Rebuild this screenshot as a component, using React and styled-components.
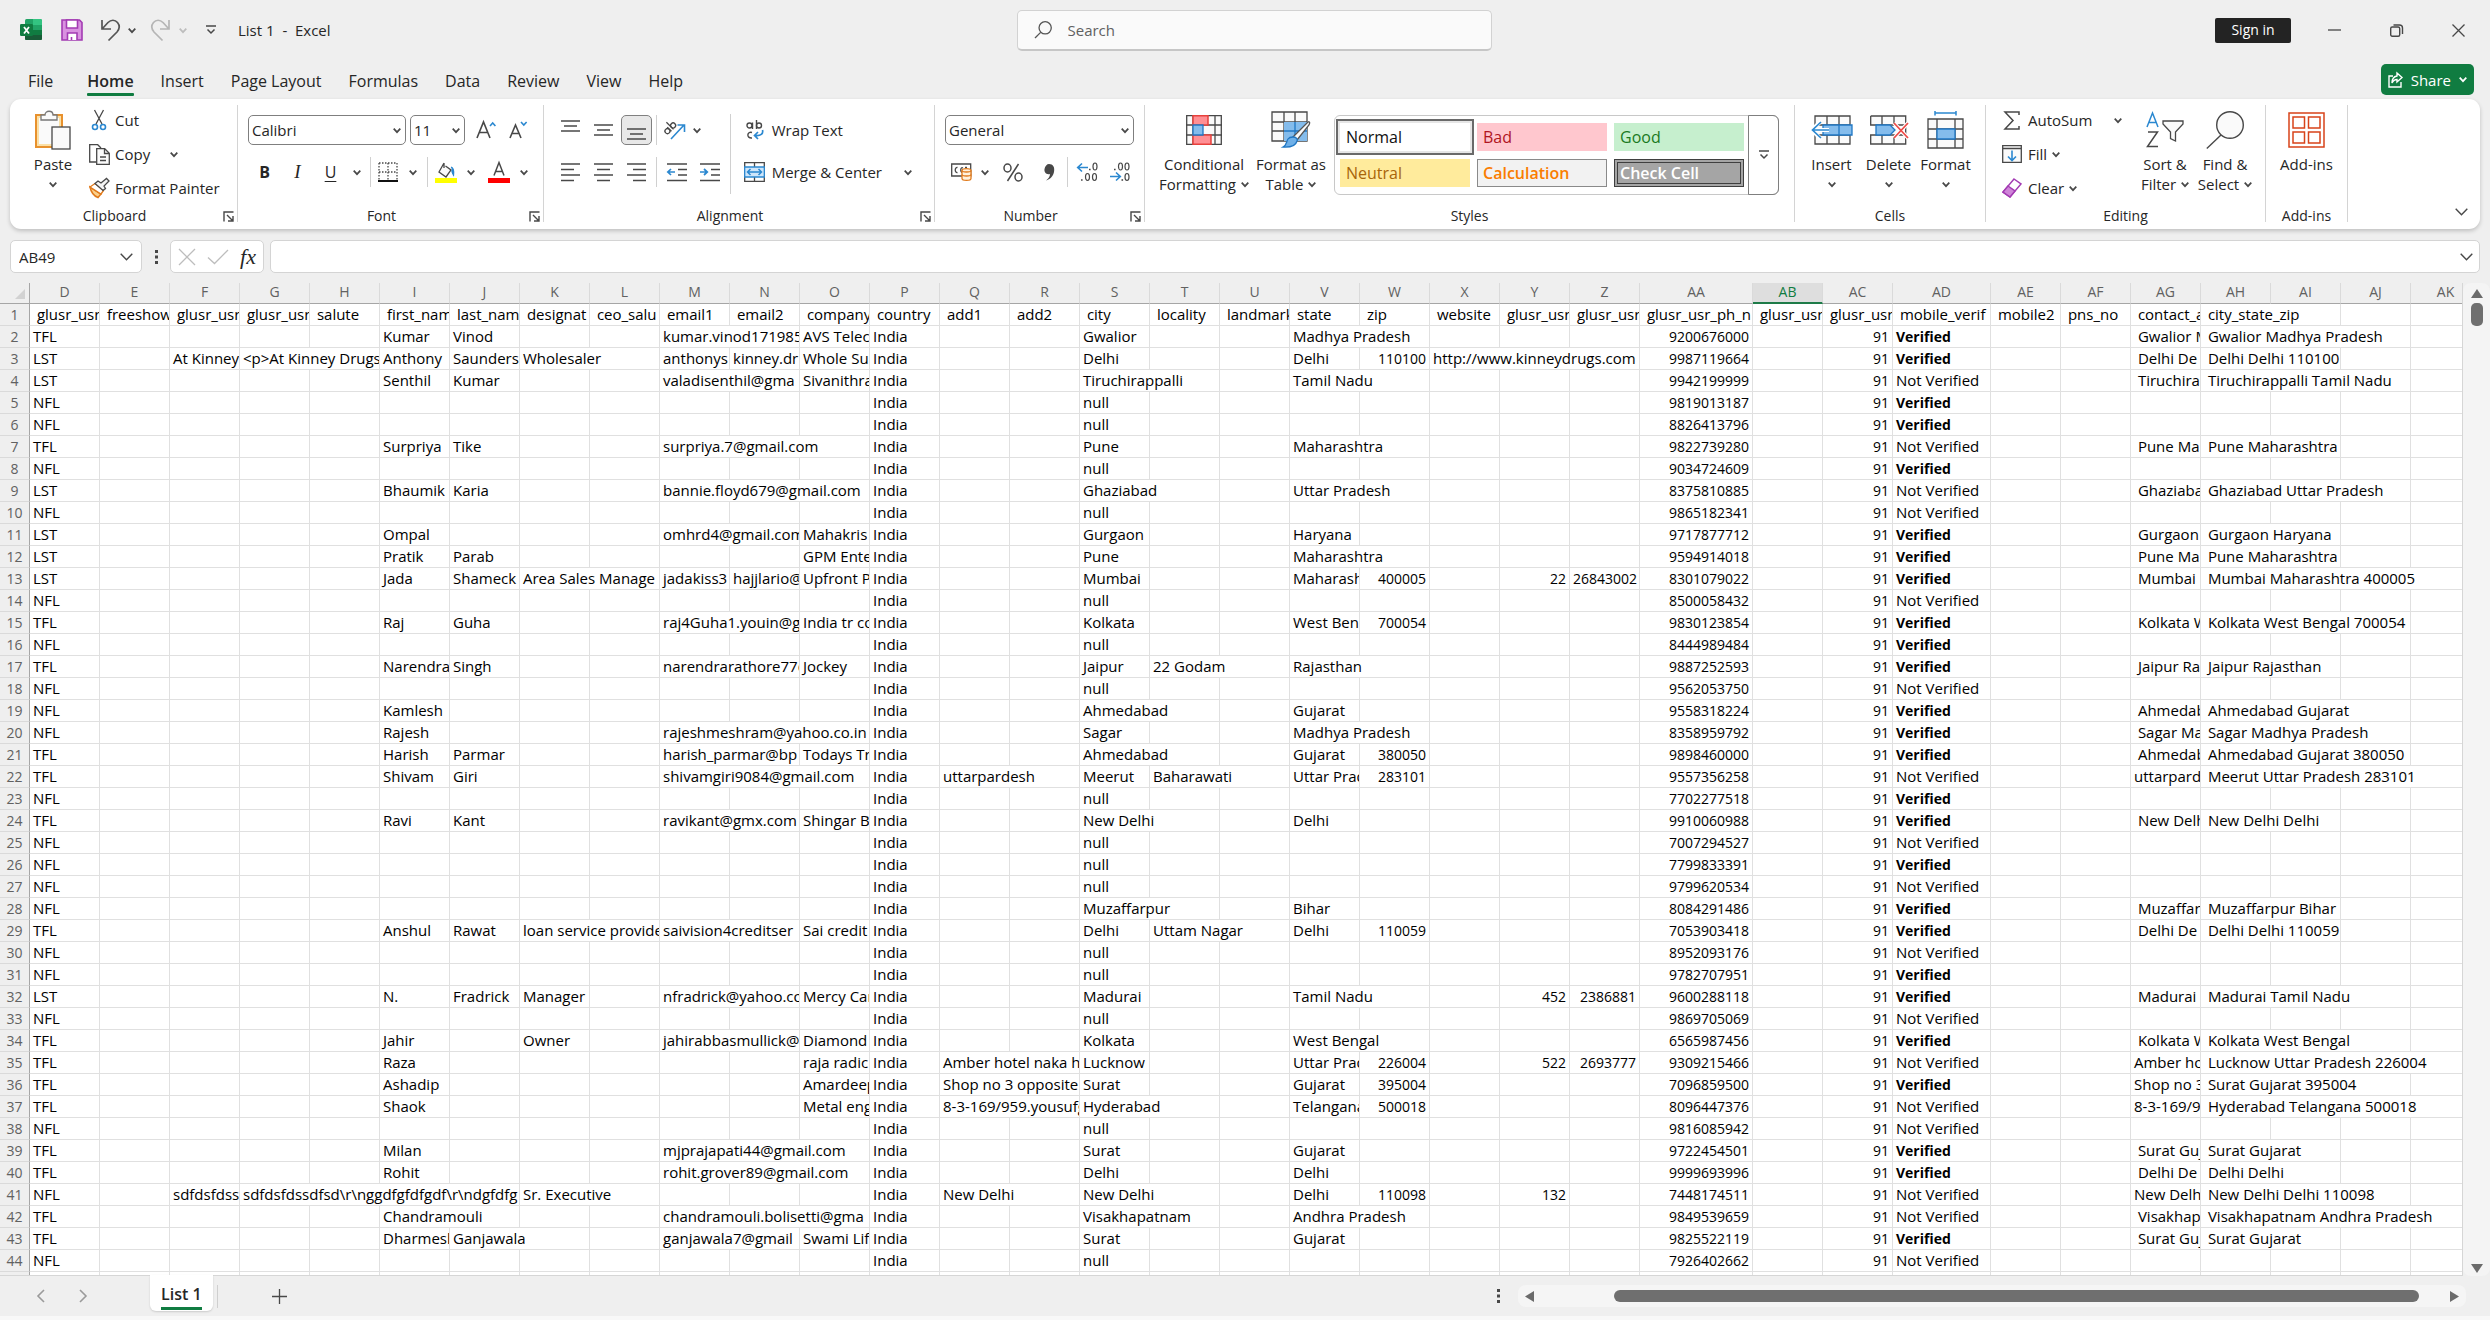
import React from "react";
import styled, { createGlobalStyle, css } from "styled-components";

const GlobalStyle = createGlobalStyle`
  *, *::before, *::after { box-sizing: border-box; }
  body { margin: 0; background: #efefef; color: #262626; font-family: "Open Sans", "Noto Sans", sans-serif; font-size: 15px; line-height: 20px; }
  button, input, select { font: inherit; color: inherit; margin: 0; }
  button { border: 0; background: none; padding: 0; cursor: pointer; white-space: nowrap; }
  svg { display: block; flex: none; overflow: visible; }
`;

/* ---------- shell ---------- */
const Window = styled.div`
  display: flex;
  flex-direction: column;
  height: 100vh;
  overflow: hidden;
`;
const TitleBar = styled.header`
  display: grid;
  grid-template-columns: 1fr 475px 1fr;
  align-items: center;
  height: 60px;
  padding: 0 0 0 20px;
`;
const QuickAccess = styled.div`
  display: flex;
  align-items: center;
  height: 41px;
`;
const QuickButton = styled.button`
  display: flex;
  justify-content: center;
  align-items: center;
  width: ${(p) => p.$w}px;
  height: 30px;
`;
const DocTitle = styled.h1`
  margin: 0 0 0 5px;
  font-size: 15px;
  font-weight: 400;
  white-space: pre;
`;
const SearchBox = styled.label`
  display: flex;
  align-items: center;
  gap: 16px;
  height: 41px;
  padding: 0 16px;
  margin: 0 1px 0 -1px;
  border: 1px solid #d2d2d2;
  border-bottom: 2px solid #c6c6c6;
  border-radius: 5px;
  background: #fafafa;
`;
const SearchInput = styled.input`
  flex: 1;
  min-width: 0;
  padding: 0;
  border: 0;
  outline: 0;
  background: none;
  &::placeholder { color: #616161; opacity: 1; }
`;
const WindowControls = styled.div`
  display: flex;
  justify-content: flex-end;
  align-items: center;
  padding-right: 1px;
`;
const SignIn = styled.button`
  width: 76px;
  height: 25px;
  margin-right: 12px;
  border-radius: 2px;
  background: #232323;
  color: #fff;
  font-size: 14px;
`;
const ControlButton = styled.button`
  display: flex;
  justify-content: center;
  align-items: center;
  width: 62px;
  height: 40px;
`;
const TabBar = styled.nav`
  display: flex;
  align-items: flex-start;
  height: 39px;
  padding: 4px 16px 0 15px;
`;
const Tab = styled.button`
  display: flex;
  flex-direction: column;
  align-items: stretch;
  margin: 0 ${(p) => (p.$file ? 21 : 14)}px 0 13px;
  padding-top: 6px;
  font-size: 16px;
  line-height: 22px;
  font-weight: ${(p) => (p.$active ? 600 : 400)};
  &::after {
    content: "";
    height: 3px;
    margin-top: 1px;
    border-radius: 1px;
    background: ${(p) => (p.$active ? "#107c41" : "transparent")};
  }
`;
const Share = styled.button`
  display: flex;
  align-items: center;
  gap: 8px;
  height: 31px;
  margin-left: auto;
  padding: 0 7px;
  border-radius: 5px;
  background: #107c41;
  color: #fff;
  font-size: 15px;
`;

/* ---------- ribbon ---------- */
const Ribbon = styled.section`
  display: flex;
  flex: none;
  height: 130px;
  margin: 0 10px 11px;
  border-radius: 11px;
  background: #fff;
  box-shadow: 0 2px 4px rgba(0, 0, 0, 0.2);
`;
const GroupBox = styled.div`
  display: flex;
  flex-direction: column;
  flex: none;
  width: ${(p) => p.$w}px;
  border-right: 1px solid;
  border-image: linear-gradient(transparent 7px, #d4d4d4 7px, #d4d4d4 122px, transparent 122px) 1;
`;
const GroupBody = styled.div`
  display: flex;
  flex: 1;
  align-items: flex-start;
  padding-left: ${(p) => p.$pad}px;
  gap: ${(p) => p.$gap || 0}px;
`;
const GroupFoot = styled.div`
  display: flex;
  align-items: center;
  height: 22px;
  padding-bottom: 4px;
  font-size: 14px;
  line-height: 18px;
`;
const GroupLabel = styled.span`
  flex: 1;
  text-align: center;
`;
const Launcher = styled.button`
  display: flex;
  justify-content: center;
  width: 18px;
`;
const BigButton = styled.button`
  display: flex;
  flex-direction: column;
  align-items: center;
  width: ${(p) => p.$w}px;
  padding-top: 10px;
`;
const BigIcon = styled.span`
  display: flex;
  align-items: center;
  height: 42px;
  margin-bottom: 3px;
`;
const Line = styled.span`
  display: flex;
  align-items: center;
  gap: 5px;
  height: 20px;
`;
const Stack = styled.div`
  display: flex;
  flex-direction: column;
  width: ${(p) => p.$w}px;
  padding-top: 4px;
`;
const StackRow = styled.div`
  display: flex;
  align-items: center;
  height: 34px;
  gap: ${(p) => p.$gap || 0}px;
`;
const IconText = styled.button`
  display: flex;
  align-items: center;
  gap: 5px;
  height: 30px;
`;
const IconSlot = styled.span`
  display: flex;
  justify-content: center;
  width: ${(p) => p.$w || 22}px;
`;
const Rows = styled.div`
  display: flex;
  flex-direction: column;
  gap: 12px;
  width: ${(p) => (p.$w ? `${p.$w}px` : "auto")};
  padding-top: 16px;
`;
const ToolRow = styled.div`
  display: flex;
  align-items: center;
  height: 30px;
`;
const Tool = styled.button`
  display: flex;
  justify-content: center;
  align-items: center;
  width: ${(p) => p.$w || 33}px;
  height: 30px;
  font-size: 17px;
  ${(p) =>
    p.$on &&
    css`
      width: 31px;
      margin: 0 1px;
      border: 1px solid #808080;
      border-radius: 5px;
      background: #e8e8e8;
    `}
`;
const Sep = styled.i`
  width: 1px;
  height: 30px;
  margin: 0 3px;
  background: #d0d0d0;
`;
const TallSep = styled.i`
  width: 1px;
  height: 80px;
  margin: 15px 12px 0 0;
  background: #d0d0d0;
`;
const Bold = styled.b`font-size: 16px; font-weight: 700;`;
const Ital = styled.i`font-family: "Liberation Serif", serif; font-size: 19px;`;
const Under = styled.u`font-size: 16px; text-underline-offset: 3px; font-weight: 400;`;
const SelectBox = styled.label`
  display: flex;
  align-items: center;
  width: ${(p) => p.$w}px;
  height: 30px;
  margin-right: 4px;
  padding: 0 4px 0 3px;
  border: 1px solid #7f7f7f;
  border-radius: 5px;
  background: #fff;
`;
const Select = styled.select`
  flex: 1;
  min-width: 0;
  padding: 0;
  border: 0;
  outline: 0;
  background: none;
  appearance: none;
`;
const Gallery = styled.div`
  display: flex;
  height: 80px;
  margin-top: 16px;
  border: 1px solid #c8c8c8;
  border-radius: 6px;
`;
const Swatches = styled.div`
  display: grid;
  grid-template-columns: repeat(3, 130px);
  grid-auto-rows: 28px;
  gap: 8px 7px;
  padding: 7px 5px;
`;
const Swatch = styled.button`
  padding: 0 5px;
  text-align: left;
  font-size: 16px;
  line-height: 24px;
  background: ${(p) => p.$bg};
  color: ${(p) => p.$fg};
  font-weight: ${(p) => (p.$bold ? 600 : 400)};
  border: 1px solid ${(p) => p.$line || p.$bg};
  ${(p) => p.$picked && css`box-shadow: 0 0 0 2px #e6e6e6, 0 0 0 4px #6a6a6a;`}
  ${(p) => p.$double && css`border: 4px double #3f3f3f; padding: 0 2px; line-height: 18px;`}
`;
const GalleryMore = styled.button`
  display: flex;
  justify-content: center;
  align-items: center;
  width: 31px;
  margin: -1px;
  border: 1px solid #7f7f7f;
  border-radius: 0 6px 6px 0;
`;
const Collapse = styled.button`
  margin: auto 12px 14px auto;
`;

/* ---------- formula bar ---------- */
const FormulaBar = styled.div`
  display: flex;
  flex: none;
  align-items: center;
  height: 33px;
  margin: 0 10px 10px;
`;
const FieldBox = styled.div`
  display: flex;
  align-items: center;
  width: ${(p) => p.$w}px;
  height: 33px;
  padding: 0 ${(p) => p.$pad || 0}px;
  border: 1px solid #d4d4d4;
  border-radius: 5px;
  background: #fff;
  ${(p) => p.$grow && css`flex: 1; margin-left: 6px;`}
`;
const FieldInput = styled.input`
  flex: 1;
  min-width: 0;
  padding: 0;
  border: 0;
  outline: 0;
  background: none;
`;
const Fx = styled.span`
  font-family: "Liberation Serif", serif;
  font-style: italic;
  font-size: 22px;
`;
const Grip = styled.span`
  display: flex;
  justify-content: center;
  width: 28px;
`;

/* ---------- grid ---------- */
const SheetArea = styled.main`
  display: flex;
  flex: 1;
  min-height: 0;
`;
const SheetClip = styled.div`
  flex: 1;
  min-width: 0;
  overflow: hidden;
  border-bottom: 1px solid #d6d6d6;
  border-right: 1px solid #d6d6d6;
`;
const Table = styled.table`
  table-layout: fixed;
  width: 2453px;
  border-spacing: 0;
  color: #000;
`;
const ColHead = styled.th`
  height: 21px;
  padding: 0;
  overflow: hidden;
  vertical-align: top;
  font-size: 14px;
  line-height: 18px;
  font-weight: 400;
  color: ${(p) => (p.$on ? "#107c41" : "#616161")};
  background: ${(p) => (p.$on ? "#dedede" : "#efefef")};
  border-right: 1px solid #dadada;
  border-bottom: ${(p) => (p.$on ? "2px solid #1e7b48" : "1px solid #a6a6a6")};
`;
const RowHead = styled.th`
  height: 22px;
  padding: 0;
  font-size: 14px;
  line-height: 21px;
  font-weight: 400;
  color: #616161;
  background: #efefef;
  border-right: 1px solid #a6a6a6;
  border-bottom: 1px solid #dadada;
`;
const Corner = styled.th`
  padding: 0 4px 4px 0;
  background: #efefef;
  border-bottom: 1px solid #a6a6a6;
  border-right: 1px solid #a6a6a6;
  vertical-align: bottom;
  line-height: 0;
  & > svg { margin-left: auto; }
`;
const Cell = styled.td`
  height: 22px;
  padding: 0 3px;
  overflow: hidden;
  white-space: pre;
  background: #fff;
  border-right: 1px solid #e0e0e0;
  border-bottom: 1px solid #e0e0e0;
  font-size: ${(p) => (p.$num ? 14 : 15)}px;
  line-height: 21px;
  text-align: ${(p) => (p.$num ? "right" : "left")};
`;
const Verified = styled.b`
  font-size: 14px;
  font-weight: 700;
`;
const VScroll = styled.div`
  display: flex;
  flex-direction: column;
  align-items: center;
  width: 27px;
  padding: 6px 0 3px;
  border-radius: 8px;
  background: #f4f4f4;
`;
const VThumb = styled.div`
  width: 12px;
  height: 23px;
  margin: 5px 0 auto;
  border-radius: 5px;
  background: #6f6f6f;
`;

/* ---------- bottom ---------- */
const SheetBar = styled.footer`
  display: flex;
  flex: none;
  align-items: center;
  height: 40px;
  padding: 0 24px 0 20px;
`;
const NavButton = styled.button`
  display: flex;
  justify-content: center;
  width: 42px;
`;
const SheetTab = styled.button`
  align-self: flex-start;
  height: 36px;
  margin: -1px 4px 0 46px;
  padding: 6px 11px 0;
  border-radius: 0 0 6px 6px;
  background: #fff;
  box-shadow: 0 1px 2px rgba(0, 0, 0, 0.15);
  font-size: 16px;
  font-weight: 600;
  line-height: 22px;
  &::after { content: ""; display: block; height: 3px; margin-top: 2px; background: #107c41; }
`;
const BarSep = styled.i`
  width: 1px;
  height: 23px;
  background: #cfcfcf;
`;
const AddSheet = styled.button`
  margin-left: 54px;
`;
const HScroll = styled.div`
  display: flex;
  flex: 0 0 calc(39% - 6px);
  align-items: center;
  height: 22px;
  margin-left: 18px;
  padding: 0 7px;
  border-radius: 8px;
  background: #f5f5f5;
`;
const HThumb = styled.div`
  flex: 1;
  height: 12px;
  margin: 0 31px 0 80px;
  border-radius: 6px;
  background: #6f6f6f;
`;
const BarSpace = styled.span`flex: 1;`;
const StatusEdge = styled.div`
  flex: none;
  height: 4px;
  background: #f8f8f8;
`;

/* ---------- icons ---------- */
const ink = "#484848";
const blue = "#2b88d0";

const Svg = ({ w, h, children, stroke = ink, sw = 1.3 }) => (
  <svg width={w} height={h} viewBox={`0 0 ${w} ${h}`} fill="none" stroke={stroke} strokeWidth={sw} aria-hidden="true">
    {children}
  </svg>
);
const Chev = ({ color = ink, w = 8 }) => (
  <Svg w={w} h={w / 2 + 1} stroke={color} sw={w > 8 ? 1.4 : 1.7}>
    <path d={`M.7 .7 L${w / 2} ${w / 2 + 0.2} L${w - 0.7} .7`} />
  </Svg>
);
const BarChev = () => (
  <Svg w={10} h={10} sw={1.5}><path d="M0 1h10M1.500 4.500 5 8l3.500-3.500" /></Svg>
);
const ExcelIcon = () => (
  <Svg w={22} h={22} stroke="none">
    <rect x="5" y="0" width="17" height="21" rx="1.500" fill="#21a366" />
    <path d="M13 0h7.500Q22 0 22 1.500V6h-9z" fill="#33c481" />
    <path d="M5 6h8v5H5z" fill="#107c41" /><path d="M5 11h8v5H5z" fill="#185c37" />
    <path d="M13 11h9v9q0 1-1.500 1H6.500Q5 21 5 20v-4h8z" fill="#185c37" />
    <path d="M13 11h9v5h-9z" fill="#107c41" />
    <rect x="0" y="5" width="13" height="12" rx="1.200" fill="#107c41" />
    <path d="M4 8l5 6.500M9 8l-5 6.500" stroke="#fff" strokeWidth="1.800" />
  </Svg>
);
const SaveIcon = () => (
  <Svg w={22} h={22} stroke="#a33bb3" sw={1.6}>
    <path d="M1 1h17.500L21 3.500V21H1z" fill="#d992e0" />
    <path d="M5.500 1h11v8h-11z" fill="#fff" /><path d="M6.500 21v-7h9.500v7" fill="#fff" /><path d="M10.500 21v-3" />
  </Svg>
);
const UndoIcon = ({ color = "#555", flip }) => (
  <Svg w={20} h={22} stroke={color} sw={1.7}>
    <g transform={flip ? "translate(20 0) scale(-1 1)" : undefined}>
      <path d="M1 1v9h9M1.500 9.500 7 3.500C10 .5 14 .5 16.500 3.500c2.500 3 2 6.500-.5 9.500L7.500 21.500" />
    </g>
  </Svg>
);
const SearchIcon = ({ s = 18 }) => (
  <Svg w={s} h={s} stroke="#555"><circle cx={s * 0.62} cy={s * 0.38} r={s * 0.34} /><path d={`M${s * 0.37} ${s * 0.63} 1 ${s - 1}`} /></Svg>
);
const ShareIcon = () => (
  <Svg w={15} h={16} stroke="#fff" sw={1.4}><path d="M5 4H1v11h12v-5M9 1l5 4.500L9 10V7.500C6 7.500 5 9 4 11c0-4 2-6.500 5-7z" /></Svg>
);
const PasteIcon = () => (
  <Svg w={36} h={40}>
    <rect x="1" y="5" width="26" height="32" fill="#fbe0a6" stroke="#e8912d" strokeWidth="2" />
    <rect x="4" y="8" width="20" height="26" fill="#fafafa" stroke="none" />
    <path d="M6 10V5h4c0-5 8-5 8 0h4v5z" fill="#fafafa" stroke="#777" />
    <rect x="17" y="17" width="18" height="22" fill="#fafafa" stroke={ink} />
  </Svg>
);
const CutIcon = () => (
  <Svg w={14} h={21}>
    <path d="M2.500 0 10 14M11.500 0 4 14" /><circle cx="3" cy="17" r="2.500" stroke={blue} strokeWidth="1.600" /><circle cx="11" cy="17" r="2.500" stroke={blue} strokeWidth="1.600" />
  </Svg>
);
const CopyIcon = () => (
  <Svg w={21} h={21}>
    <path d="M7 18H.7V.7h8L12 4" /><path d="M7.700 4.700h8l4.600 4.600v11H7.700z" fill="#fafafa" /><path d="M15.500 5v4.500h4.500M11 13h6M11 16.500h6" />
  </Svg>
);
const PainterIcon = () => (
  <Svg w={21} h={20}>
    <path d="M1 9 12 16 9 19.500C5 18 2 14 1 9z" fill="#fbd08a" stroke="#e07a1c" strokeWidth="1.500" />
    <path d="M1 9l5-3.500 8.500 7L12 16z" fill="#fff" stroke="#e07a1c" strokeWidth="1.300" />
    <path d="M6 5.500 9 3l3 2 5.500-4.500 2.500 2.500-5 5 1.500 2.500-2.500 2z" fill="#f4f4f4" />
  </Svg>
);
const LaunchIcon = () => (
  <Svg w={11} h={11} sw={1.4}><path d="M1 10.500V1h9.500M4 4l5.500 5.500M10 5v5H5" /></Svg>
);
const GrowIcon = ({ down }) => (
  <Svg w={20} h={18} sw={1.6}>
    {down ? (
      <><path d="M1 17 6.500 4 12 17M3 12.500h7" /><path d="M12 1l2.800 3L17.600 1" stroke={blue} /></>
    ) : (
      <><path d="M1 17 7.500 1 14 17M3.300 11.500h8.500" /><path d="M14 5l2.700-3L19.400 5" stroke={blue} /></>
    )}
  </Svg>
);
const BorderIcon = () => (
  <Svg w={20} h={20} sw={1.3}>
    <path d="M1 1h18M1 10h18M1 1v17M10 1v17M19 1v17" strokeDasharray="1.500 1.500" /><path d="M0 19h20" stroke="#111" strokeWidth="2" />
  </Svg>
);
const FillIcon = () => (
  <Svg w={22} h={21}>
    <path d="M9 1 4 10l7 5 5-7-5.500-4M9 1v5" fill="#fafafa" /><path d="M16 5c3 1 3 4 2.500 8-1.500-2-2-3-1.500-5" fill={blue} stroke={blue} />
    <path d="M0 18.500h22" stroke="#ffff00" strokeWidth="5" />
  </Svg>
);
const FontColorIcon = () => (
  <Svg w={22} h={21} sw={1.5}><path d="M6 13.500 11 .5l5 13M7.500 9.500h7" /><path d="M0 18.500h22" stroke="#ff0000" strokeWidth="5" /></Svg>
);
const LinesIcon = ({ lines, h = 18 }) => (
  <Svg w={19} h={h} sw={1.5}>{lines.map(([x, y, w]) => <path key={y} d={`M${x} ${y}h${w}`} />)}</Svg>
);
const full = (x) => [[0, 1, 19], [x, 6.5, 13], [0, 12, 19], [x, 17.5, 13]];
const OrientIcon = () => (
  <Svg w={22} h={20}>
    <g transform="rotate(-45 7 9)"><circle cx="3" cy="8" r="2.500" /><path d="M5.700 5v6M8.500 1v10" /><circle cx="11" cy="8" r="2.500" /></g>
    <path d="M7 19 20 5M13.500 5H20.500V12" stroke={blue} strokeWidth="1.600" />
  </Svg>
);
const IndentIcon = ({ right }) => (
  <Svg w={20} h={18} sw={1.5}>
    <path d="M0 1h20M11 6.500h9M11 12h9M0 17.500h20" />
    <path d={right ? "M0 9h7M4 6l3.300 3L4 12" : "M1 9h7M4 6 .8 9 4 12"} stroke={blue} strokeWidth="1.700" />
  </Svg>
);
const WrapIcon = () => (
  <Svg w={18} h={20} sw={1.4}>
    <circle cx="3.500" cy="5.500" r="2.500" /><path d="M6.500 2.500V9M10.500 0v9" /><circle cx="13" cy="5.500" r="2.500" /><path d="M6 12.500c-5-1.500-6 6 0 5.500" />
    <path d="M16.500 10c1 4-2 6-7 5.500M12 12l-3.500 3.500L12 19" stroke={blue} strokeWidth="1.700" />
  </Svg>
);
const MergeIcon = () => (
  <Svg w={21} h={20}>
    <path d="M.7.7h19.600v18.600H.7zM10.500 0v5M10.500 15v5" /><path d="M.7 5h19.600v10H.7z" fill="#cfe6fa" stroke={blue} />
    <path d="M3.500 10h14M6.500 7l-3 3 3 3M14.500 7l3 3-3 3" stroke={blue} strokeWidth="1.500" />
  </Svg>
);
const MoneyIcon = () => (
  <Svg w={21} h={18}>
    <path d="M.7 1h19v12H.7z" /><path d="M6.500 4.500c-3-.5-3 5.500 0 5M12 5c-3-1.500-3 5 0 4.500M14 4.500h2" />
    <path d="M11 7.500v8c0 2.500 9 2.500 9 0v-8c0-2.500-9-2.500-9 0z" fill="#fff2dd" stroke="#e07a1c" /><path d="M11 7.500c0 2 9 2 9 0M11 11.500c0 2 9 2 9 0" stroke="#e07a1c" />
  </Svg>
);
const PercentIcon = () => (
  <Svg w={20} h={19} sw={1.5}><ellipse cx="4.500" cy="5" rx="3.500" ry="4" /><ellipse cx="15.500" cy="14" rx="3.500" ry="4" /><path d="M15.500 1 4.500 18" /></Svg>
);
const CommaIcon = () => (
  <Svg w={11} h={17} stroke="none"><path d="M5 0c4 0 6 3 5 8-.8 4-4 7.500-8 8.500 2.500-2 4-4 4-6.500C2 11 0 8 .5 5 1 2 3 0 5 0z" fill={ink} /></Svg>
);
const Zero = ({ x, y }) => <ellipse cx={x} cy={y} rx="2" ry="3.500" strokeWidth="1.200" />;
const Dot = ({ x, y }) => <path d={`M${x} ${y}h1.600`} strokeWidth="1.600" />;
const DecimalIcon = ({ less }) => (
  <Svg w={21} h={20}>
    {less ? (
      <><Dot x={4} y={7.5} /><Zero x={10.5} y={4.5} /><Zero x={17} y={4.5} /><Dot x={11.5} y={18} /><Zero x={17} y={15} /><path d="M0 14.500h10M6 10.500l4.300 4-4.300 4" stroke={blue} strokeWidth="1.600" /></>
    ) : (
      <><Dot x={12} y={7.5} /><Zero x={18} y={4.5} /><Dot x={4} y={18} /><Zero x={10.5} y={15} /><Zero x={17.5} y={15} /><path d="M1 5.500h10M5 1.500 .7 5.500l4.300 4" stroke={blue} strokeWidth="1.600" /></>
    )}
  </Svg>
);
const CondIcon = () => (
  <Svg w={36} h={30}>
    <path d="M.7.7h34.600v28.600H.7zM0 10h36M0 20h36M7 0v30M29 0v30" fill="#fafafa" />
    <path d="M7 .7h15V10H7zM7 20h18v9.300H7z" fill="#ff8f94" stroke="#e8413c" strokeWidth="1.500" /><path d="M7 10h10v10H7z" fill="#84bcec" stroke="#1f77c4" />
  </Svg>
);
const TableIcon = () => (
  <Svg w={40} h={38}>
    <path d="M1 1h35v29H1zM1 11h35M1 20h35M13 1v29M24 1v29" fill="#fafafa" /><path d="M13 11h23v19H13z" fill="#84bcec" stroke="none" />
    <path d="M24 11v19M13 20h23" stroke="#1f77c4" />
    <path d="M37 11c2-1 2 1 1 3L26 29l-4-3z" fill="#fafafa" stroke="#555" /><path d="M22 26c3 0 5 2 4 4-1 4-6 6.500-14 6 4-2 3-5 5-8 1-1.500 3-2 5-2z" fill="#6fb0e8" stroke="#1f77c4" />
  </Svg>
);
const InsertIcon = () => (
  <Svg w={42} h={30}>
    <path d="M4 1h35v28H4zM4 10h35M4 20h35M16 1v28M28 1v28" fill="#fafafa" /><path d="M12 10h29v10H12z" fill="#84bcec" stroke="#1f77c4" /><path d="M28 10v10" stroke="#1f77c4" />
    <path d="M1 15h17M10 6 1 15l9 9" stroke="#fff" strokeWidth="4" /><path d="M1 15h17M10 7 1.500 15l8.500 8" stroke={blue} strokeWidth="1.700" />
  </Svg>
);
const DeleteIcon = () => (
  <Svg w={38} h={30}>
    <path d="M.7 1h35v28H.7V20h5M5 10H.7V1M.7 10h35M.7 20h35M12 1v9M24 1v9M12 20v9M24 20v9" fill="#fafafa" /><path d="M6 10h14l5 5-5 5H6z" fill="#84bcec" stroke="#1f77c4" />
    <path d="M24 8 38 23M38 8 24 23" stroke="#fff" strokeWidth="4" /><path d="M24 8 38 23M38 8 24 23" stroke="#ee4b47" strokeWidth="1.800" />
  </Svg>
);
const FormatIcon = () => (
  <Svg w={37} h={38}>
    <path d="M8 2h21M8 0v4.500M29 0v4.500" stroke={blue} strokeWidth="1.500" /><path d="M1 8h35v29H1zM1 18h35M1 28h35M10 8v29M28 8v29" fill="#fafafa" /><path d="M10 18h18v10H10z" fill="#84bcec" stroke="#1f77c4" />
  </Svg>
);
const SumIcon = () => <Svg w={16} h={19} sw={1.5}><path d="M15 4V1H1l8 8.500L1 18h14v-3" /></Svg>;
const DownIcon = () => (
  <Svg w={20} h={18}><path d="M.7.7h18.600v16.600H.7zM.7 3.500h18.600" fill="#fafafa" /><path d="M10 5.500v10M6 11.500l4 4 4-4" stroke={blue} strokeWidth="1.600" /></Svg>
);
const EraserIcon = () => (
  <Svg w={20} h={20} stroke="#a33bb3" sw={1.5}><path d="M12 1l7 5-11 13-7-5z" fill="#fff" /><path d="M6 8l7 5-5 6-7-5z" fill="#cf85d8" /></Svg>
);
const SortIcon = () => (
  <Svg w={38} h={36} sw={1.5}>
    <path d="M1 15 6.500 1 12 15M3 10.500h7.500" stroke={blue} /><path d="M2 20h9.500L1.500 34.500H12" /><path d="M17 9h20v3l-7.500 8v9l-5-2.500V20L17 12z" fill="#fafafa" strokeWidth="1.300" />
  </Svg>
);
const FindIcon = () => (
  <Svg w={38} h={38} sw={1.4}><circle cx="24" cy="14" r="13.300" fill="#fafafa" /><path d="M15 24 .8 37.500" /></Svg>
);
const AddinIcon = () => (
  <Svg w={37} h={36} stroke="#d8431a" sw={1.5}><path d="M1 1h35v34H1zM5 5h11.500v11H5zM20.500 5H32v11H20.500zM5 20h11.500v11H5zM20.500 20H32v11H20.500z" /></Svg>
);
const Dots = () => (
  <Svg w={3} h={14} stroke="none"><path d="M0 0h3v3H0zM0 5.500h3v3H0zM0 11h3v3H0z" fill={ink} /></Svg>
);
const Arrow = ({ d, w, h, label }) => (
  <button aria-label={label}><svg width={w} height={h} viewBox={`0 0 ${w} ${h}`}><path d={d} fill="#6b6b6b" /></svg></button>
);

/* ---------- sheet data ---------- */
// "text|n" lets the text run across n columns, the way a long value spills into blank neighbours.
const COLS = "D E F G H I J K L M N O P Q R S T U V W X Y Z AA AB AC AD AE AF AG AH AI AJ AK".split(" ");
const WIDTHS = { AA: 113, AD: 98 };
const NUMERIC = new Set(["W", "Y", "Z", "AA", "AC"]);

const HEADER = {
  D: " glusr_usr", E: " freeshow", F: " glusr_usr", G: " glusr_usr", H: " salute", I: " first_nam", J: " last_nam", K: " designat",
  L: " ceo_salu", M: " email1", N: " email2", O: " company", P: " country", Q: " add1", R: " add2", S: " city", T: " locality",
  U: " landmark", V: " state", W: " zip", X: " website", Y: " glusr_usr", Z: " glusr_usr", AA: " glusr_usr_ph_n", AB: " glusr_usr",
  AC: " glusr_usr", AD: " mobile_verif", AE: " mobile2", AF: " pns_no", AG: " contact_a", AH: " city_state_zip|2",
};

const V = 1, N = 0;
const DATA = [
  ["TFL", "9200676000", V, { I: "Kumar", J: "Vinod", M: "kumar.vinod171985@|2", O: "AVS Telec", S: "Gwalior", V: "Madhya Pradesh|2", AG: " Gwalior M", AH: " Gwalior Madhya Pradesh|3" }],
  ["LST", "9987119664", V, { F: "At Kinney", G: "<p>At Kinney Drugs|2", I: "Anthony", J: "Saunders", K: "Wholesaler|2", M: "anthonys", N: "kinney.dr", O: "Whole Su", S: "Delhi", V: "Delhi", W: "110100", X: "http://www.kinneydrugs.com|3", AG: " Delhi De", AH: " Delhi Delhi 110100|2" }],
  ["LST", "9942199999", N, { I: "Senthil", J: "Kumar", M: "valadisenthil@gma|2", O: "Sivanithra", S: "Tiruchirappalli|2", V: "Tamil Nadu|2", AG: " Tiruchira", AH: " Tiruchirappalli Tamil Nadu|3" }],
  ["NFL", "9819013187", V],
  ["NFL", "8826413796", V],
  ["TFL", "9822739280", N, { I: "Surpriya", J: "Tike", M: "surpriya.7@gmail.com|3", S: "Pune", V: "Maharashtra|2", AG: " Pune Ma", AH: " Pune Maharashtra|2" }],
  ["NFL", "9034724609", V],
  ["LST", "8375810885", N, { I: "Bhaumik", J: "Karia", M: "bannie.floyd679@gmail.com|3", S: "Ghaziabad|2", V: "Uttar Pradesh|2", AG: " Ghaziaba", AH: " Ghaziabad Uttar Pradesh|3" }],
  ["NFL", "9865182341", N],
  ["LST", "9717877712", V, { I: "Ompal", M: "omhrd4@gmail.com|2", O: "Mahakris", S: "Gurgaon", V: "Haryana", AG: " Gurgaon", AH: " Gurgaon Haryana|2" }],
  ["LST", "9594914018", V, { I: "Pratik", J: "Parab", O: "GPM Ente", S: "Pune", V: "Maharashtra|2", AG: " Pune Ma", AH: " Pune Maharashtra|2" }],
  ["LST", "8301079022", V, { I: "Jada", J: "Shameck", K: "Area Sales Manage|2", M: "jadakiss3", N: "hajjlario@", O: "Upfront P", S: "Mumbai", V: "Maharash", W: "400005", Y: "22", Z: "26843002", AG: " Mumbai", AH: " Mumbai Maharashtra 400005|4" }],
  ["NFL", "8500058432", N],
  ["TFL", "9830123854", V, { I: "Raj", J: "Guha", M: "raj4Guha1.youin@g|2", O: "India tr co", S: "Kolkata", V: "West Ben", W: "700054", AG: " Kolkata W", AH: " Kolkata West Bengal 700054|3" }],
  ["NFL", "8444989484", V],
  ["TFL", "9887252593", V, { I: "Narendra", J: "Singh", M: "narendrarathore77@|2", O: "Jockey", S: "Jaipur", T: "22 Godam|2", V: "Rajasthan|2", AG: " Jaipur Ra", AH: " Jaipur Rajasthan|2" }],
  ["NFL", "9562053750", N],
  ["NFL", "9558318224", V, { I: "Kamlesh", S: "Ahmedabad|2", V: "Gujarat", AG: " Ahmedab", AH: " Ahmedabad Gujarat|3" }],
  ["NFL", "8358959792", V, { I: "Rajesh", M: "rajeshmeshram@yahoo.co.in|3", S: "Sagar", V: "Madhya Pradesh|2", AG: " Sagar Ma", AH: " Sagar Madhya Pradesh|3" }],
  ["TFL", "9898460000", V, { I: "Harish", J: "Parmar", M: "harish_parmar@bp|2", O: "Todays Tr", S: "Ahmedabad|2", V: "Gujarat", W: "380050", AG: " Ahmedab", AH: " Ahmedabad Gujarat 380050|3" }],
  ["TFL", "9557356258", N, { I: "Shivam", J: "Giri", M: "shivamgiri9084@gmail.com|3", Q: "uttarpardesh|2", S: "Meerut", T: "Baharawati|2", V: "Uttar Prad", W: "283101", AG: "uttarpard", AH: " Meerut Uttar Pradesh 283101|4" }],
  ["NFL", "7702277518", V],
  ["TFL", "9910060988", V, { I: "Ravi", J: "Kant", M: "ravikant@gmx.com|2", O: "Shingar B", S: "New Delhi|2", V: "Delhi", AG: " New Delh", AH: " New Delhi Delhi|2" }],
  ["NFL", "7007294527", N],
  ["NFL", "7799833391", V],
  ["NFL", "9799620534", N],
  ["NFL", "8084291486", V, { S: "Muzaffarpur|2", V: "Bihar", AG: " Muzaffar", AH: " Muzaffarpur Bihar|2" }],
  ["TFL", "7053903418", V, { I: "Anshul", J: "Rawat", K: "loan service provide|2", M: "saivision4creditser|2", O: "Sai credit", S: "Delhi", T: "Uttam Nagar|2", V: "Delhi", W: "110059", AG: " Delhi De", AH: " Delhi Delhi 110059|2" }],
  ["NFL", "8952093176", N],
  ["NFL", "9782707951", V],
  ["LST", "9600288118", V, { I: "N.", J: "Fradrick", K: "Manager", M: "nfradrick@yahoo.co|2", O: "Mercy Car", S: "Madurai", V: "Tamil Nadu|2", Y: "452", Z: "2386881", AG: " Madurai", AH: " Madurai Tamil Nadu|3" }],
  ["NFL", "9869705069", N],
  ["TFL", "6565987456", V, { I: "Jahir", K: "Owner", M: "jahirabbasmullick@|2", O: "Diamond", S: "Kolkata", V: "West Bengal|2", AG: " Kolkata W", AH: " Kolkata West Bengal|3" }],
  ["TFL", "9309215466", N, { I: "Raza", O: "raja radic", Q: "Amber hotel naka h|2", S: "Lucknow", V: "Uttar Prad", W: "226004", Y: "522", Z: "2693777", AG: "Amber ho", AH: " Lucknow Uttar Pradesh 226004|4" }],
  ["TFL", "7096859500", V, { I: "Ashadip", O: "Amardeep", Q: "Shop no 3 opposite|2", S: "Surat", V: "Gujarat", W: "395004", AG: "Shop no 3", AH: " Surat Gujarat 395004|3" }],
  ["TFL", "8096447376", N, { I: "Shaok", O: "Metal eng", Q: "8-3-169/959.yousufg|2", S: "Hyderabad|2", V: "Telangana", W: "500018", AG: "8-3-169/95", AH: " Hyderabad Telangana 500018|4" }],
  ["NFL", "9816085942", N],
  ["TFL", "9722454501", V, { I: "Milan", M: "mjprajapati44@gmail.com|3", S: "Surat", V: "Gujarat", AG: " Surat Guj", AH: " Surat Gujarat|2" }],
  ["TFL", "9999693996", V, { I: "Rohit", M: "rohit.grover89@gmail.com|3", S: "Delhi", V: "Delhi", AG: " Delhi De", AH: " Delhi Delhi|2" }],
  ["NFL", "7448174511", N, { F: "sdfdsfdss", G: "sdfdsfdssdfsd\\r\\nggdfgfdfgdf\\r\\ndgfdfg|4", K: "Sr. Executive|2", Q: "New Delhi|2", S: "New Delhi|2", V: "Delhi", W: "110098", Y: "132", AG: "New Delh", AH: " New Delhi Delhi 110098|3" }],
  ["TFL", "9849539659", N, { I: "Chandramouli|2", M: "chandramouli.bolisetti@gma|3", S: "Visakhapatnam|2", V: "Andhra Pradesh|2", AG: " Visakhap", AH: " Visakhapatnam Andhra Pradesh|4" }],
  ["TFL", "9825522119", V, { I: "Dharmesh", J: "Ganjawala|2", M: "ganjawala7@gmail|2", O: "Swami Lif", S: "Surat", V: "Gujarat", AG: " Surat Guj", AH: " Surat Gujarat|2" }],
  ["NFL", "7926402662", N],
];
const ROWS = [
  HEADER,
  ...DATA.map(([type, phone, ok, rest]) => ({
    D: type, P: "India", AA: phone, AC: "91", AD: ok ? "Verified" : "Not Verified", ...(rest || { S: "null" }),
  })),
  {},
];

function SheetRow({ row, number }) {
  const cells = [];
  for (let i = 0; i < COLS.length; ) {
    const col = COLS[i];
    const [text, run] = (row[col] || "").split("|");
    const span = Number(run || 1);
    cells.push(
      <Cell key={col} colSpan={span} $num={number > 1 && NUMERIC.has(col)}>
        {text === "Verified" ? <Verified>{text}</Verified> : text}
      </Cell>
    );
    i += span;
  }
  return <tr><RowHead scope="row">{number}</RowHead>{cells}</tr>;
}

function Group({ label, w, pad, gap, launcher, children }) {
  return (
    <GroupBox $w={w}>
      <GroupBody $pad={pad} $gap={gap}>{children}</GroupBody>
      <GroupFoot>
        <GroupLabel>{label}</GroupLabel>
        {launcher && <Launcher aria-label={`${label} settings`}><LaunchIcon /></Launcher>}
      </GroupFoot>
    </GroupBox>
  );
}
const Big = ({ w, icon, lines, drop }) => (
  <BigButton $w={w}>
    <BigIcon>{icon}</BigIcon>
    {lines.map((t, i) => <Line key={t}>{t}{drop && lines.length > 1 && i === 1 && <Chev />}</Line>)}
    {drop && lines.length === 1 && <Line><Chev /></Line>}
  </BigButton>
);
const Drop = ({ w = 20, label }) => <Tool $w={w} aria-label={label}><Chev /></Tool>;

const TABS = ["File", "Home", "Insert", "Page Layout", "Formulas", "Data", "Review", "View", "Help"];
const STYLES = [
  { name: "Normal", $bg: "#fff", $fg: "#111", $picked: true },
  { name: "Bad", $bg: "#ffc7ce", $fg: "#b0151f" },
  { name: "Good", $bg: "#c6efce", $fg: "#1a7a1f" },
  { name: "Neutral", $bg: "#ffeb9c", $fg: "#a8650a" },
  { name: "Calculation", $bg: "#f2f2f2", $fg: "#fa7d00", $bold: true, $line: "#8a8a8a" },
  { name: "Check Cell", $bg: "#a5a5a5", $fg: "#fff", $bold: true, $double: true },
];

export default function App() {
  return (
    <Window>
      <GlobalStyle />
      <TitleBar>
        <QuickAccess>
          <ExcelIcon />
          <QuickButton $w={60} aria-label="Save"><SaveIcon /></QuickButton>
          <QuickButton $w={18} aria-label="Undo"><UndoIcon /></QuickButton>
          <QuickButton $w={23} aria-label="Undo list"><Chev /></QuickButton>
          <QuickButton $w={34} aria-label="Redo"><UndoIcon color="#b5b5b5" flip /></QuickButton>
          <QuickButton $w={12} aria-label="Redo list"><Chev color="#bdbdbd" /></QuickButton>
          <QuickButton $w={44} aria-label="Customize toolbar"><BarChev /></QuickButton>
          <DocTitle>{"List 1  -  Excel"}</DocTitle>
        </QuickAccess>
        <SearchBox>
          <SearchIcon />
          <SearchInput placeholder="Search" aria-label="Search" />
        </SearchBox>
        <WindowControls>
          <SignIn>Sign in</SignIn>
          <ControlButton aria-label="Minimize"><Svg w={13} h={2}><path d="M0 1h13" /></Svg></ControlButton>
          <ControlButton aria-label="Restore"><Svg w={13} h={13} sw={1.4}><rect x=".7" y="3" width="9" height="9.300" rx="1.500" /><path d="M3.500 1h6q3 0 3 3v6" /></Svg></ControlButton>
          <ControlButton aria-label="Close"><Svg w={13} h={13}><path d="M.5.5l12 12M12.500.5l-12 12" /></Svg></ControlButton>
        </WindowControls>
      </TitleBar>

      <TabBar>
        {TABS.map((t) => <Tab key={t} $active={t === "Home"} $file={t === "File"}>{t}</Tab>)}
        <Share><ShareIcon />Share<Chev color="#fff" /></Share>
      </TabBar>

      <Ribbon>
        <Group label="Clipboard" w={228} pad={22} gap={14} launcher>
          <Big w={42} icon={<PasteIcon />} lines={["Paste"]} drop />
          <Stack>
            <StackRow><IconText><IconSlot><CutIcon /></IconSlot>Cut</IconText></StackRow>
            <StackRow $gap={14}><IconText><IconSlot><CopyIcon /></IconSlot>Copy</IconText><Drop label="Copy options" /></StackRow>
            <StackRow><IconText><IconSlot><PainterIcon /></IconSlot>Format Painter</IconText></StackRow>
          </Stack>
        </Group>

        <Group label="Font" w={306} pad={10} launcher>
          <Rows>
            <ToolRow>
              <SelectBox $w={158}><Select aria-label="Font name"><option>Calibri</option></Select><Chev /></SelectBox>
              <SelectBox $w={55}><Select aria-label="Font size"><option>11</option></Select><Chev /></SelectBox>
              <Tool aria-label="Increase font size"><GrowIcon /></Tool>
              <Tool aria-label="Decrease font size"><GrowIcon down /></Tool>
            </ToolRow>
            <ToolRow>
              <Tool aria-label="Bold"><Bold>B</Bold></Tool>
              <Tool aria-label="Italic"><Ital>I</Ital></Tool>
              <Tool aria-label="Underline"><Under>U</Under></Tool>
              <Drop label="Underline options" />
              <Sep />
              <Tool $w={28} aria-label="Borders"><BorderIcon /></Tool>
              <Drop w={22} label="Border options" />
              <Sep />
              <Tool $w={30} aria-label="Fill color"><FillIcon /></Tool>
              <Drop label="Fill color options" />
              <Tool $w={36} aria-label="Font color"><FontColorIcon /></Tool>
              <Drop w={14} label="Font color options" />
            </ToolRow>
          </Rows>
        </Group>

        <Group label="Alignment" w={391} pad={10} launcher>
          <Rows $w={178}>
            <ToolRow>
              <Tool aria-label="Top align"><LinesIcon h={20} lines={[[0, 1, 19], [3, 6, 13], [0, 11, 19]]} /></Tool>
              <Tool aria-label="Middle align"><LinesIcon h={20} lines={[[0, 5, 19], [3, 10, 13], [0, 15, 19]]} /></Tool>
              <Tool $on aria-label="Bottom align"><LinesIcon h={20} lines={[[0, 9, 19], [3, 14, 13], [0, 19, 19]]} /></Tool>
              <Sep />
              <Tool $w={30} aria-label="Orientation"><OrientIcon /></Tool>
              <Drop w={14} label="Orientation options" />
            </ToolRow>
            <ToolRow>
              <Tool aria-label="Align left"><LinesIcon lines={full(0)} /></Tool>
              <Tool aria-label="Center"><LinesIcon lines={full(3)} /></Tool>
              <Tool aria-label="Align right"><LinesIcon lines={full(6)} /></Tool>
              <Sep />
              <Tool aria-label="Decrease indent"><IndentIcon /></Tool>
              <Tool aria-label="Increase indent"><IndentIcon right /></Tool>
            </ToolRow>
          </Rows>
          <TallSep />
          <Rows>
            <ToolRow><IconText><IconSlot $w={24}><WrapIcon /></IconSlot>Wrap Text</IconText></ToolRow>
            <ToolRow><IconText><IconSlot $w={24}><MergeIcon /></IconSlot>Merge &amp; Center</IconText><Drop w={52} label="Merge options" /></ToolRow>
          </Rows>
        </Group>

        <Group label="Number" w={210} pad={10} launcher>
          <Rows>
            <ToolRow><SelectBox $w={189}><Select aria-label="Number format"><option>General</option></Select><Chev /></SelectBox></ToolRow>
            <ToolRow>
              <Tool aria-label="Accounting format"><MoneyIcon /></Tool>
              <Drop w={14} label="Accounting options" />
              <Tool $w={42} aria-label="Percent"><PercentIcon /></Tool>
              <Tool $w={30} aria-label="Comma style"><CommaIcon /></Tool>
              <Sep />
              <Tool aria-label="Increase decimal"><DecimalIcon /></Tool>
              <Tool aria-label="Decrease decimal"><DecimalIcon less /></Tool>
            </ToolRow>
          </Rows>
        </Group>

        <Group label="Styles" w={650} pad={15} gap={3}>
          <Big w={88} icon={<CondIcon />} lines={["Conditional", "Formatting"]} drop />
          <Big w={80} icon={<TableIcon />} lines={["Format as", "Table"]} drop />
          <Gallery>
            <Swatches>{STYLES.map(({ name, ...s }) => <Swatch key={name} {...s}>{name}</Swatch>)}</Swatches>
            <GalleryMore aria-label="More styles"><BarChev /></GalleryMore>
          </Gallery>
        </Group>

        <Group label="Cells" w={191} pad={8}>
          <Big w={57} icon={<InsertIcon />} lines={["Insert"]} drop />
          <Big w={57} icon={<DeleteIcon />} lines={["Delete"]} drop />
          <Big w={57} icon={<FormatIcon />} lines={["Format"]} drop />
        </Group>

        <Group label="Editing" w={280} pad={15}>
          <Stack $w={134}>
            <StackRow $gap={16}><IconText><IconSlot><SumIcon /></IconSlot>AutoSum</IconText><Drop label="AutoSum options" /></StackRow>
            <StackRow><IconText><IconSlot><DownIcon /></IconSlot>Fill<Chev /></IconText></StackRow>
            <StackRow><IconText><IconSlot><EraserIcon /></IconSlot>Clear<Chev /></IconText></StackRow>
          </Stack>
          <Big w={60} icon={<SortIcon />} lines={["Sort &", "Filter"]} drop />
          <Big w={60} icon={<FindIcon />} lines={["Find &", "Select"]} drop />
        </Group>

        <Group label="Add-ins" w={82} pad={0}>
          <Big w={81} icon={<AddinIcon />} lines={["Add-ins"]} />
        </Group>
        <Collapse aria-label="Collapse ribbon"><Chev w={13} /></Collapse>
      </Ribbon>

      <FormulaBar>
        <FieldBox $w={132} $pad={8}><FieldInput aria-label="Name box" defaultValue="AB49" /><Chev w={13} /></FieldBox>
        <Grip><Dots /></Grip>
        <FieldBox $w={94}>
          <Tool $w={31} aria-label="Cancel"><Svg w={16} h={16} stroke="#bdbdbd"><path d="M0 0l16 16M16 0 0 16" /></Svg></Tool>
          <Tool $w={31} aria-label="Enter"><Svg w={20} h={14} stroke="#bdbdbd"><path d="M0 7.500 6.500 13.500 20 0" /></Svg></Tool>
          <Tool $w={30} aria-label="Insert function"><Fx>fx</Fx></Tool>
        </FieldBox>
        <FieldBox $grow $pad={6}><FieldInput aria-label="Formula" /><Chev w={13} /></FieldBox>
      </FormulaBar>

      <SheetArea>
        <SheetClip>
          <Table>
            <colgroup>
              <col style={{ width: 30 }} />
              {COLS.map((c) => <col key={c} style={{ width: WIDTHS[c] || 70 }} />)}
            </colgroup>
            <thead>
              <tr>
                <Corner aria-label="Select all"><svg width="10" height="10"><path d="M10 0v10H0z" fill="#d2d2d2" /></svg></Corner>
                {COLS.map((c) => <ColHead key={c} scope="col" $on={c === "AB"}>{c}</ColHead>)}
              </tr>
            </thead>
            <tbody>{ROWS.map((r, i) => <SheetRow key={i} row={r} number={i + 1} />)}</tbody>
          </Table>
        </SheetClip>
        <VScroll>
          <Arrow label="Scroll up" w={12} h={9} d="M6 0l6 9H0z" />
          <VThumb />
          <Arrow label="Scroll down" w={12} h={9} d="M6 9l6-9H0z" />
        </VScroll>
      </SheetArea>

      <SheetBar>
        <NavButton aria-label="Previous sheet"><Svg w={8} h={12} stroke="#9a9a9a" sw={1.6}><path d="M7 0 1 6l6 6" /></Svg></NavButton>
        <NavButton aria-label="Next sheet"><Svg w={8} h={12} stroke="#9a9a9a" sw={1.6}><path d="M1 0l6 6-6 6" /></Svg></NavButton>
        <SheetTab>List 1</SheetTab>
        <BarSep />
        <AddSheet aria-label="New sheet"><Svg w={15} h={15}><path d="M7.500 0v15M0 7.500h15" /></Svg></AddSheet>
        <BarSpace />
        <Dots />
        <HScroll>
          <Arrow label="Scroll left" w={9} h={11} d="M9 0v11L0 5.500z" />
          <HThumb />
          <Arrow label="Scroll right" w={9} h={11} d="M0 0v11l9-5.500z" />
        </HScroll>
      </SheetBar>
      <StatusEdge />
    </Window>
  );
}
